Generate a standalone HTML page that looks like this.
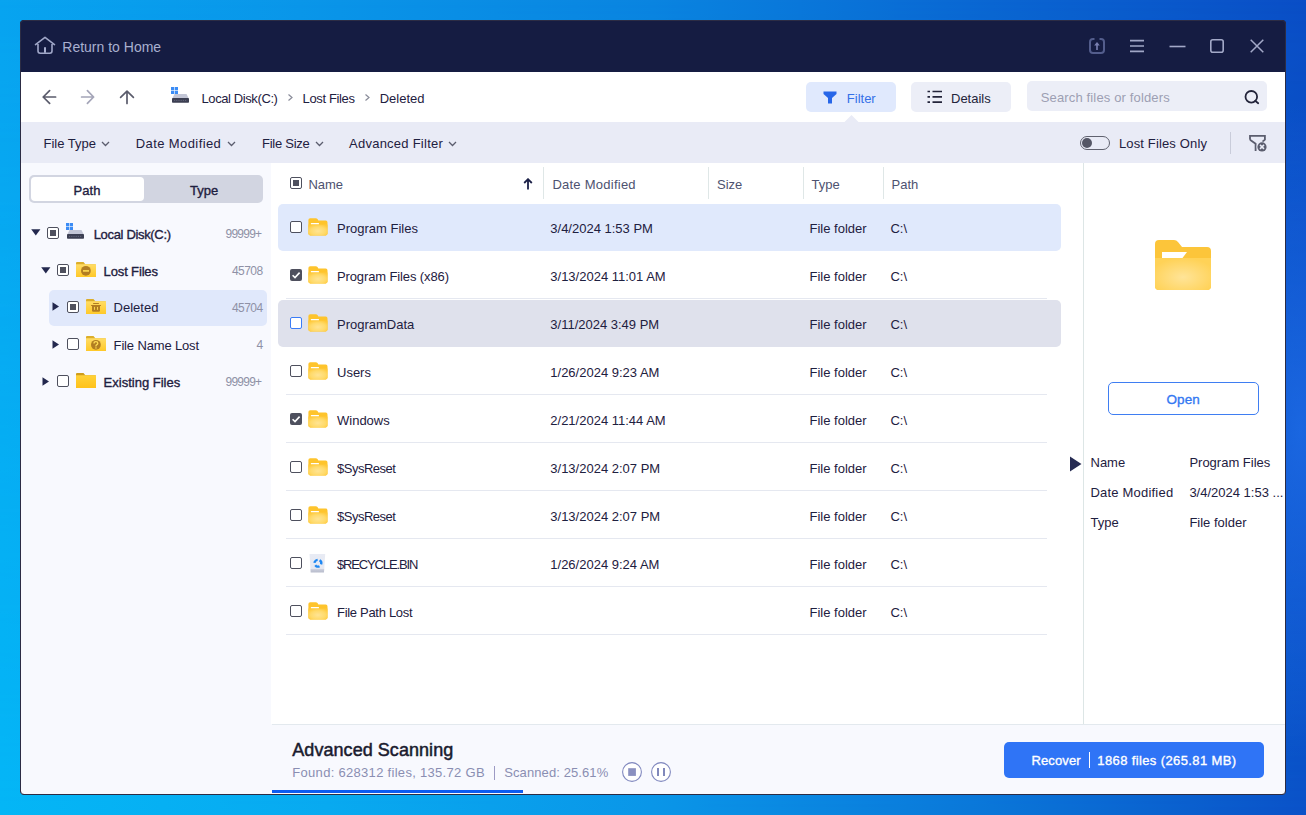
<!DOCTYPE html>
<html><head><meta charset="utf-8"><style>
html,body{margin:0;padding:0;}
body{width:1306px;height:815px;overflow:hidden;position:relative;font-family:"Liberation Sans",sans-serif;
background:linear-gradient(90deg,#08a4f0 0%,#0a96e9 23%,#0a84e0 50%,#0a66d2 76%,#0a4ec6 100%);}
body::before{content:"";position:absolute;left:0;top:0;width:1306px;height:815px;
background:linear-gradient(90deg,#04b6f6 0%,#08aaf0 25%,#0a96e8 50%,#0a76d8 76%,#0a52c8 100%);
-webkit-mask-image:linear-gradient(180deg,rgba(0,0,0,0) 0%,rgba(0,0,0,0.5) 50%,#000 100%);}
#bg2{position:absolute;left:1200px;top:0;width:106px;height:815px;
background:radial-gradient(ellipse 90px 330px at 100px 430px,rgba(40,120,245,0.55),rgba(40,120,245,0) 100%);}
#bd{position:absolute;left:20px;top:20px;width:1266px;height:775px;box-sizing:border-box;border:1px solid #2c2c44;border-radius:4px;pointer-events:none;}
.r{position:absolute;}
.t{position:absolute;white-space:nowrap;}
#win{position:absolute;left:20px;top:20px;width:1266px;height:775px;box-sizing:border-box;border:1px solid #2d3048;border-radius:4px;background:#f8f9fe;}
</style></head><body>
<div id="bg2"></div>
<div id="win"></div>
<div class="r" style="left:20px;top:20px;width:1266px;height:52px;background:#151c42;border-radius:4px 4px 0 0;"></div>
<svg class="r" style="left:34px;top:36px;" width="22" height="19" viewBox="0 0 22 19"><path d="M1.5 8.6 L11 1.3 L20.5 8.6 M4 6.8 V15 Q4 17.2 6.2 17.2 H15.8 Q18 17.2 18 15 V6.8" fill="none" stroke="#a0a7c8" stroke-width="1.6" stroke-linejoin="round" stroke-linecap="round"/><path d="M11 16.8 V11.2" stroke="#a8afd0" stroke-width="2"/></svg>
<div class="t" style="left:62.3px;top:38.15px;font-size:14px;line-height:18px;color:#a9b0d0;">Return to Home</div>
<svg class="r" style="left:1088px;top:37px;" width="18" height="18" viewBox="0 0 18 18"><path d="M6.5 2 H5 Q2 2 2 5 V13 Q2 16 5 16 H13 Q16 16 16 13 V5 Q16 2 13 2 H11.5" fill="none" stroke="#535d8c" stroke-width="2"/><path d="M6.2 8.6 L9 5 L11.8 8.6 Z" fill="#7a80b2"/><rect x="8.2" y="8" width="1.6" height="5" fill="#7a80b2"/></svg>
<svg class="r" style="left:1130px;top:39px;" width="14" height="14" viewBox="0 0 14 14"><path d="M0 1.6 H14 M0 7 H14 M0 12.4 H14" stroke="#a0a6c6" stroke-width="1.6"/></svg>
<svg class="r" style="left:1169px;top:45px;" width="17" height="3" viewBox="0 0 17 3"><path d="M0.5 1.5 H16.5" stroke="#a3a9c8" stroke-width="1.6"/></svg>
<svg class="r" style="left:1210px;top:39px;" width="14" height="14" viewBox="0 0 14 14"><rect x="0.8" y="0.8" width="12.4" height="12.4" rx="2" fill="none" stroke="#a3a9c8" stroke-width="1.6"/></svg>
<svg class="r" style="left:1250px;top:39px;" width="14" height="14" viewBox="0 0 14 14"><path d="M0.7 0.7 L13.3 13.3 M13.3 0.7 L0.7 13.3" stroke="#a3a9c8" stroke-width="1.5"/></svg>
<div class="r" style="left:21px;top:72px;width:1264px;height:50px;background:#ffffff;"></div>
<svg class="r" style="left:42px;top:89px;" width="16" height="16" viewBox="0 0 16 16"><path d="M13.6 8 H1.2 M7.6 1.6 L1.2 8 L7.6 14.4" fill="none" stroke="#5a5b6b" stroke-width="1.7" stroke-linecap="round" stroke-linejoin="round"/></svg>
<svg class="r" style="left:80px;top:89px;" width="16" height="16" viewBox="0 0 16 16"><path d="M1.6 8 H13.6 M7.4 1.6 L13.6 8 L7.4 14.4" fill="none" stroke="#a4a5b8" stroke-width="1.7" stroke-linecap="round" stroke-linejoin="round"/></svg>
<svg class="r" style="left:119px;top:89px;" width="16" height="16" viewBox="0 0 16 16"><path d="M8 14.4 V2.2 M1.6 8.4 L8 2.2 L14.4 8.4" fill="none" stroke="#5a5b6b" stroke-width="1.7" stroke-linecap="round" stroke-linejoin="round"/></svg>
<svg class="r" style="left:171px;top:87px;" width="19" height="17" viewBox="0 0 19 17"><rect x="0" y="0" width="3.2" height="3.2" fill="#3b8cf5"/><rect x="3.8" y="0" width="3.2" height="3.2" fill="#3b8cf5"/><rect x="0" y="3.8" width="3.2" height="3.2" fill="#3b8cf5"/><rect x="3.8" y="3.8" width="3.2" height="3.2" fill="#3b8cf5"/><path d="M3.5 7 H15.5 L17.5 11 H1.5 Z" fill="#c3c6d6"/><rect x="1" y="11" width="17" height="4.8" rx="0.8" fill="#3c3f52"/><path d="M3 13.4 H16" stroke="#6d7085" stroke-width="0.8" stroke-dasharray="1.2 1"/></svg>
<div class="t" style="left:201.5px;top:90.50px;font-size:13px;line-height:16px;color:#1e2040;letter-spacing:-0.4px;">Local Disk(C:)</div>
<svg class="r" style="left:287px;top:93px;" width="7" height="9" viewBox="0 0 7 9"><path d="M1.5 1.5 L5 4.5 L1.5 7.5" fill="none" stroke="#8a8c9a" stroke-width="1.2"/></svg>
<div class="t" style="left:302.5px;top:90.50px;font-size:13px;line-height:16px;color:#1e2040;letter-spacing:-0.35px;">Lost Files</div>
<svg class="r" style="left:364px;top:93px;" width="7" height="9" viewBox="0 0 7 9"><path d="M1.5 1.5 L5 4.5 L1.5 7.5" fill="none" stroke="#8a8c9a" stroke-width="1.2"/></svg>
<div class="t" style="left:379.7px;top:90.50px;font-size:13px;line-height:16px;color:#1e2040;">Deleted</div>
<div class="r" style="left:806px;top:82px;width:90px;height:30px;background:#e0e9fd;border-radius:5px;"></div>
<svg class="r" style="left:823px;top:91px;" width="14" height="13" viewBox="0 0 14 13"><path d="M0.5 0.5 H13.5 V3 L9 7 V12.5 H5 V7 L0.5 3 Z" fill="#2766e8"/></svg>
<div class="t" style="left:846.8px;top:90.50px;font-size:13px;line-height:16px;color:#3470e8;">Filter</div>
<div class="r" style="left:911px;top:82px;width:100px;height:30px;background:#eceef7;border-radius:5px;"></div>
<svg class="r" style="left:927px;top:90px;" width="16" height="14" viewBox="0 0 16 14"><path d="M0.5 1.5 H3 M0.5 6.8 H3 M0.5 12.2 H3 M5.5 1.5 H15 M5.5 6.8 H15 M5.5 12.2 H15" stroke="#23243a" stroke-width="1.7"/></svg>
<div class="t" style="left:951.0px;top:90.50px;font-size:13px;line-height:16px;color:#23243a;">Details</div>
<svg class="r" style="left:844px;top:115px;" width="15" height="8" viewBox="0 0 15 8"><path d="M0 7.5 L7.5 0 L15 7.5 Z" fill="#e9ebf6"/></svg>
<div class="r" style="left:1027px;top:81px;width:240px;height:30px;background:#eceef7;border-radius:5px;"></div>
<div class="t" style="left:1040.7px;top:89.50px;font-size:13px;line-height:16px;color:#9d9fb3;letter-spacing:0.15px;">Search files or folders</div>
<svg class="r" style="left:1244px;top:90px;" width="17" height="15" viewBox="0 0 17 15"><circle cx="7.3" cy="6.8" r="5.8" fill="none" stroke="#23243a" stroke-width="1.8"/><path d="M11.2 10.8 L14.2 13.2" stroke="#23243a" stroke-width="1.8" stroke-linecap="round"/></svg>
<div class="r" style="left:21px;top:122px;width:1264px;height:41px;background:#e9ebf6;"></div>
<div class="t" style="left:43.5px;top:136.10px;font-size:13px;line-height:16px;color:#1e2040;">File Type</div>
<svg class="r" style="left:100.5px;top:141px;" width="9" height="6" viewBox="0 0 9 6"><path d="M1 1 L4.5 4.5 L8 1" fill="none" stroke="#5b5d6e" stroke-width="1.3"/></svg>
<div class="t" style="left:135.8px;top:136.10px;font-size:13px;line-height:16px;color:#1e2040;letter-spacing:0.4px;">Date Modified</div>
<svg class="r" style="left:227px;top:141px;" width="9" height="6" viewBox="0 0 9 6"><path d="M1 1 L4.5 4.5 L8 1" fill="none" stroke="#5b5d6e" stroke-width="1.3"/></svg>
<div class="t" style="left:262.0px;top:136.10px;font-size:13px;line-height:16px;color:#1e2040;letter-spacing:-0.25px;">File Size</div>
<svg class="r" style="left:314.5px;top:141px;" width="9" height="6" viewBox="0 0 9 6"><path d="M1 1 L4.5 4.5 L8 1" fill="none" stroke="#5b5d6e" stroke-width="1.3"/></svg>
<div class="t" style="left:349.0px;top:136.10px;font-size:13px;line-height:16px;color:#1e2040;letter-spacing:0.25px;">Advanced Filter</div>
<svg class="r" style="left:448px;top:141px;" width="9" height="6" viewBox="0 0 9 6"><path d="M1 1 L4.5 4.5 L8 1" fill="none" stroke="#5b5d6e" stroke-width="1.3"/></svg>
<div class="r" style="left:1080px;top:136px;width:30px;height:14px;box-sizing:border-box;border:1.3px solid #60626f;border-radius:7px;"></div>
<div class="r" style="left:1082px;top:138px;width:10px;height:10px;background:#555766;border-radius:50%;"></div>
<div class="t" style="left:1118.9px;top:136.10px;font-size:13px;line-height:16px;color:#1e2040;letter-spacing:0.15px;">Lost Files Only</div>
<div class="r" style="left:1230px;top:132px;width:1px;height:22px;background:#c9ccda;"></div>
<svg class="r" style="left:1248px;top:134px;" width="21" height="20" viewBox="0 0 21 20"><path d="M2 5.8 V1.9 H16.9 V5.6 L14.3 7.9 M2 5.8 L7.6 9.8 V16.9" fill="none" stroke="#5b5d6e" stroke-width="1.8"/><circle cx="14" cy="12.9" r="5.4" fill="#e9ebf6"/><circle cx="14" cy="12.9" r="4.6" fill="#5b5d6e"/><path d="M12 10.9 L16 14.9 M16 10.9 L12 14.9" stroke="#e9ebf6" stroke-width="1.5"/></svg>
<div class="r" style="left:21px;top:163px;width:250px;height:631px;background:#f8f9fe;"></div>
<div class="r" style="left:29px;top:175px;width:234px;height:28px;background:#d2d5e1;border-radius:5px;"></div>
<div class="r" style="left:31px;top:177px;width:113px;height:24px;background:#ffffff;border-radius:4px;"></div>
<div class="t" style="left:73.4px;top:182.70px;font-size:13px;line-height:16px;color:#1e2040;-webkit-text-stroke:0.35px #1e2040;letter-spacing:0.1px;">Path</div>
<div class="t" style="left:190.0px;top:182.70px;font-size:13px;line-height:16px;color:#1e2040;-webkit-text-stroke:0.35px #1e2040;">Type</div>
<svg class="r" style="left:31px;top:229px;" width="10" height="7" viewBox="0 0 10 7"><path d="M0.2 0.3 H9.4 L4.8 6.6 Z" fill="#23284e"/></svg>
<div class="r" style="left:47px;top:227px;width:12px;height:12px;box-sizing:border-box;border:1.4px solid #4e505e;border-radius:2px;background:#fff;"></div>
<div class="r" style="left:50px;top:230px;width:6px;height:6px;background:#4e505e;"></div>
<svg class="r" style="left:66px;top:223px;" width="19" height="17" viewBox="0 0 19 17"><rect x="0" y="0" width="3.2" height="3.2" fill="#3b8cf5"/><rect x="3.8" y="0" width="3.2" height="3.2" fill="#3b8cf5"/><rect x="0" y="3.8" width="3.2" height="3.2" fill="#3b8cf5"/><rect x="3.8" y="3.8" width="3.2" height="3.2" fill="#3b8cf5"/><path d="M3.5 7 H15.5 L17.5 11 H1.5 Z" fill="#c3c6d6"/><rect x="1" y="11" width="17" height="4.8" rx="0.8" fill="#3c3f52"/><path d="M3 13.4 H16" stroke="#6d7085" stroke-width="0.8" stroke-dasharray="1.2 1"/></svg>
<div class="t" style="left:93.7px;top:226.50px;font-size:13px;line-height:16px;color:#1e2040;-webkit-text-stroke:0.35px #1e2040;letter-spacing:-0.33px;">Local Disk(C:)</div>
<div class="t" style="left:225.5px;top:227.34px;font-size:12px;line-height:15px;color:#8f91a6;letter-spacing:-0.75px;">99999+</div>
<svg class="r" style="left:41px;top:267px;" width="10" height="7" viewBox="0 0 10 7"><path d="M0.2 0.3 H9.4 L4.8 6.6 Z" fill="#23284e"/></svg>
<div class="r" style="left:57px;top:264px;width:12px;height:12px;box-sizing:border-box;border:1.4px solid #4e505e;border-radius:2px;background:#fff;"></div>
<div class="r" style="left:60px;top:267px;width:6px;height:6px;background:#4e505e;"></div>
<svg class="r" style="left:76px;top:262px;" width="20" height="15" viewBox="0 0 20 15"><defs><linearGradient id="g76262" x1="0" y1="0" x2="0" y2="1"><stop offset="0" stop-color="#ffdc66"/><stop offset="1" stop-color="#ffc928"/></linearGradient></defs><path d="M0 1 Q0 0 1 0 H7.5 L9.3 2.2 H19 Q20 2.2 20 3.2 V14.2 Q20 15 19.2 15 H0.8 Q0 15 0 14.2 Z" fill="#dcae2a"/><path d="M0 2.2 H20 V14.2 Q20 15 19.2 15 H0.8 Q0 15 0 14.2 Z" fill="url(#g76262)"/><circle cx="9.9" cy="8.8" r="4.9" fill="#b27d22"/><rect x="7" y="8.1" width="6" height="1.6" fill="#ffdc55"/></svg>
<div class="t" style="left:103.6px;top:263.50px;font-size:13px;line-height:16px;color:#1e2040;-webkit-text-stroke:0.35px #1e2040;letter-spacing:-0.14px;">Lost Files</div>
<div class="t" style="left:232.0px;top:264.34px;font-size:12px;line-height:15px;color:#8f91a6;letter-spacing:-0.55px;">45708</div>
<div class="r" style="left:49px;top:290px;width:218px;height:36px;background:#e0e8fb;border-radius:5px;"></div>
<svg class="r" style="left:52px;top:302px;" width="8" height="10" viewBox="0 0 8 10"><path d="M0.5 0.3 V8.7 L7 4.5 Z" fill="#23284e"/></svg>
<div class="r" style="left:67px;top:301px;width:12px;height:12px;box-sizing:border-box;border:1.4px solid #4e505e;border-radius:2px;background:#fff;"></div>
<div class="r" style="left:70px;top:304px;width:6px;height:6px;background:#4e505e;"></div>
<svg class="r" style="left:86px;top:299px;" width="20" height="15" viewBox="0 0 20 15"><defs><linearGradient id="g86299" x1="0" y1="0" x2="0" y2="1"><stop offset="0" stop-color="#ffdc66"/><stop offset="1" stop-color="#ffc928"/></linearGradient></defs><path d="M0 1 Q0 0 1 0 H7.5 L9.3 2.2 H19 Q20 2.2 20 3.2 V14.2 Q20 15 19.2 15 H0.8 Q0 15 0 14.2 Z" fill="#dcae2a"/><path d="M0 2.2 H20 V14.2 Q20 15 19.2 15 H0.8 Q0 15 0 14.2 Z" fill="url(#g86299)"/><rect x="7" y="3.9" width="6" height="1" rx="0.5" fill="#b27d22"/><rect x="5" y="6" width="10" height="1" rx="0.5" fill="#b27d22"/><path d="M6 6.8 H14 V11.5 Q14 12.8 12.7 12.8 H7.3 Q6 12.8 6 11.5 Z" fill="#b27d22"/><rect x="8.1" y="7.9" width="0.9" height="2.9" fill="#ffdc55"/><rect x="11.1" y="7.9" width="0.9" height="2.9" fill="#ffdc55"/></svg>
<div class="t" style="left:113.6px;top:300.20px;font-size:13px;line-height:16px;color:#1e2040;">Deleted</div>
<div class="t" style="left:232.0px;top:301.04px;font-size:12px;line-height:15px;color:#8f91a6;letter-spacing:-0.55px;">45704</div>
<svg class="r" style="left:52px;top:340px;" width="8" height="10" viewBox="0 0 8 10"><path d="M0.5 0.3 V8.7 L7 4.5 Z" fill="#23284e"/></svg>
<div class="r" style="left:67px;top:338px;width:12px;height:12px;box-sizing:border-box;border:1.4px solid #4e505e;border-radius:2px;background:#fff;"></div>
<svg class="r" style="left:86px;top:336px;" width="20" height="15" viewBox="0 0 20 15"><defs><linearGradient id="g86336" x1="0" y1="0" x2="0" y2="1"><stop offset="0" stop-color="#ffdc66"/><stop offset="1" stop-color="#ffc928"/></linearGradient></defs><path d="M0 1 Q0 0 1 0 H7.5 L9.3 2.2 H19 Q20 2.2 20 3.2 V14.2 Q20 15 19.2 15 H0.8 Q0 15 0 14.2 Z" fill="#dcae2a"/><path d="M0 2.2 H20 V14.2 Q20 15 19.2 15 H0.8 Q0 15 0 14.2 Z" fill="url(#g86336)"/><circle cx="9.9" cy="8.8" r="4.9" fill="#b27d22"/><path d="M8 7.4 Q8 5.6 9.9 5.6 Q11.8 5.6 11.8 7.3 Q11.8 8.4 10.6 8.9 Q9.9 9.2 9.9 10.4" fill="none" stroke="#ffdc55" stroke-width="1.3"/><rect x="9.3" y="11.3" width="1.3" height="1.3" fill="#ffdc55"/></svg>
<div class="t" style="left:113.6px;top:337.50px;font-size:13px;line-height:16px;color:#1e2040;letter-spacing:-0.15px;">File Name Lost</div>
<div class="t" style="left:256.5px;top:338.34px;font-size:12px;line-height:15px;color:#8f91a6;">4</div>
<svg class="r" style="left:42px;top:377px;" width="8" height="10" viewBox="0 0 8 10"><path d="M0.5 0.3 V8.7 L7 4.5 Z" fill="#23284e"/></svg>
<div class="r" style="left:57px;top:375px;width:12px;height:12px;box-sizing:border-box;border:1.4px solid #4e505e;border-radius:2px;background:#fff;"></div>
<svg class="r" style="left:76px;top:373px;" width="20" height="15" viewBox="0 0 20 15"><defs><linearGradient id="g76373" x1="0" y1="0" x2="0" y2="1"><stop offset="0" stop-color="#ffd23a"/><stop offset="1" stop-color="#ffc21a"/></linearGradient></defs><path d="M0 1 Q0 0 1 0 H7.5 L9.3 2.2 H19 Q20 2.2 20 3.2 V14.2 Q20 15 19.2 15 H0.8 Q0 15 0 14.2 Z" fill="#cf9d1c"/><path d="M0 2.2 H20 V14.2 Q20 15 19.2 15 H0.8 Q0 15 0 14.2 Z" fill="url(#g76373)"/></svg>
<div class="t" style="left:103.6px;top:374.50px;font-size:13px;line-height:16px;color:#1e2040;-webkit-text-stroke:0.35px #1e2040;">Existing Files</div>
<div class="t" style="left:225.5px;top:375.34px;font-size:12px;line-height:15px;color:#8f91a6;letter-spacing:-0.75px;">99999+</div>
<svg width="0" height="0" style="position:absolute"><defs><radialGradient id="fg" cx="0.5" cy="0.6" r="0.65"><stop offset="0" stop-color="#ffe494"/><stop offset="0.6" stop-color="#ffda6a"/><stop offset="1" stop-color="#ffc93a"/></radialGradient></defs></svg>
<div class="r" style="left:271px;top:163px;width:812px;height:561px;background:#ffffff;"></div>
<div class="r" style="left:290px;top:177px;width:12px;height:12px;box-sizing:border-box;border:1.4px solid #4e505e;border-radius:2px;background:#fff;"></div>
<div class="r" style="left:293px;top:180px;width:6px;height:6px;background:#4e505e;"></div>
<div class="t" style="left:308.4px;top:176.50px;font-size:13px;line-height:16px;color:#4d5270;">Name</div>
<svg class="r" style="left:522px;top:178px;" width="12" height="12" viewBox="0 0 12 12"><path d="M6 11.5 V1.5 M2.2 5 L6 1.2 L9.8 5" fill="none" stroke="#1b2047" stroke-width="1.8"/></svg>
<div class="r" style="left:543px;top:167px;width:1px;height:32px;background:#dfe7e7;"></div>
<div class="r" style="left:708px;top:167px;width:1px;height:32px;background:#dfe7e7;"></div>
<div class="r" style="left:803px;top:167px;width:1px;height:32px;background:#dfe7e7;"></div>
<div class="r" style="left:883px;top:167px;width:1px;height:32px;background:#dfe7e7;"></div>
<div class="t" style="left:552.4px;top:176.50px;font-size:13px;line-height:16px;color:#4d5270;letter-spacing:0.25px;">Date Modified</div>
<div class="t" style="left:717.0px;top:176.50px;font-size:13px;line-height:16px;color:#4d5270;">Size</div>
<div class="t" style="left:811.6px;top:176.50px;font-size:13px;line-height:16px;color:#4d5270;">Type</div>
<div class="t" style="left:891.6px;top:176.50px;font-size:13px;line-height:16px;color:#4d5270;">Path</div>
<div class="r" style="left:286px;top:250px;width:761px;height:1px;background:#e5e8f0;"></div>
<div class="r" style="left:278px;top:204px;width:783px;height:47px;background:#e0e9fc;border-radius:5px;"></div>
<div class="r" style="left:290px;top:221px;width:12px;height:12px;box-sizing:border-box;border:1.4px solid #4e505e;border-radius:2px;background:#fff;"></div>
<svg class="r" style="left:308px;top:218px;" width="20" height="18" viewBox="0 0 20 18"><path d="M0.4 2 Q0.4 0.2 2.2 0.2 H7.8 Q8.8 0.2 9.5 1.1 L10.4 2.6 H17.7 Q19.5 2.6 19.5 4.4 V15.6 Q19.5 17.4 17.7 17.4 H2.2 Q0.4 17.4 0.4 15.6 Z" fill="#fec42c"/><rect x="2.8" y="4.9" width="8.2" height="1.6" rx="0.5" fill="#fff"/><path d="M0.4 6.5 H19.5 V15.6 Q19.5 17.4 17.7 17.4 H2.2 Q0.4 17.4 0.4 15.6 Z" fill="url(#fg)"/></svg>
<div class="t" style="left:337.0px;top:220.80px;font-size:13px;line-height:16px;color:#1e2040;">Program Files</div>
<div class="t" style="left:550.3px;top:220.80px;font-size:13px;line-height:16px;color:#1e2040;">3/4/2024 1:53 PM</div>
<div class="t" style="left:809.5px;top:220.80px;font-size:13px;line-height:16px;color:#1e2040;">File folder</div>
<div class="t" style="left:890.4px;top:220.80px;font-size:13px;line-height:16px;color:#1e2040;">C:\</div>
<div class="r" style="left:286px;top:298px;width:761px;height:1px;background:#e5e8f0;"></div>
<div class="r" style="left:290px;top:269px;width:12px;height:12px;background:#4e505e;border-radius:2px;"></div>
<svg class="r" style="left:290px;top:269px;" width="12" height="12" viewBox="0 0 12 12"><path d="M2.6 6.2 L5 8.6 L9.6 3.6" fill="none" stroke="#fff" stroke-width="1.6"/></svg>
<svg class="r" style="left:308px;top:266px;" width="20" height="18" viewBox="0 0 20 18"><path d="M0.4 2 Q0.4 0.2 2.2 0.2 H7.8 Q8.8 0.2 9.5 1.1 L10.4 2.6 H17.7 Q19.5 2.6 19.5 4.4 V15.6 Q19.5 17.4 17.7 17.4 H2.2 Q0.4 17.4 0.4 15.6 Z" fill="#fec42c"/><rect x="2.8" y="4.9" width="8.2" height="1.6" rx="0.5" fill="#fff"/><path d="M0.4 6.5 H19.5 V15.6 Q19.5 17.4 17.7 17.4 H2.2 Q0.4 17.4 0.4 15.6 Z" fill="url(#fg)"/></svg>
<div class="t" style="left:337.0px;top:268.80px;font-size:13px;line-height:16px;color:#1e2040;letter-spacing:-0.12px;">Program Files (x86)</div>
<div class="t" style="left:550.3px;top:268.80px;font-size:13px;line-height:16px;color:#1e2040;">3/13/2024 11:01 AM</div>
<div class="t" style="left:809.5px;top:268.80px;font-size:13px;line-height:16px;color:#1e2040;">File folder</div>
<div class="t" style="left:890.4px;top:268.80px;font-size:13px;line-height:16px;color:#1e2040;">C:\</div>
<div class="r" style="left:286px;top:346px;width:761px;height:1px;background:#e5e8f0;"></div>
<div class="r" style="left:278px;top:300px;width:783px;height:47px;background:#dfe1ec;border-radius:5px;"></div>
<div class="r" style="left:290px;top:317px;width:12px;height:12px;box-sizing:border-box;border:1.4px solid #3b7cf6;border-radius:2px;background:#fff;"></div>
<svg class="r" style="left:308px;top:314px;" width="20" height="18" viewBox="0 0 20 18"><path d="M0.4 2 Q0.4 0.2 2.2 0.2 H7.8 Q8.8 0.2 9.5 1.1 L10.4 2.6 H17.7 Q19.5 2.6 19.5 4.4 V15.6 Q19.5 17.4 17.7 17.4 H2.2 Q0.4 17.4 0.4 15.6 Z" fill="#fec42c"/><rect x="2.8" y="4.9" width="8.2" height="1.6" rx="0.5" fill="#fff"/><path d="M0.4 6.5 H19.5 V15.6 Q19.5 17.4 17.7 17.4 H2.2 Q0.4 17.4 0.4 15.6 Z" fill="url(#fg)"/></svg>
<div class="t" style="left:337.0px;top:316.80px;font-size:13px;line-height:16px;color:#1e2040;">ProgramData</div>
<div class="t" style="left:550.3px;top:316.80px;font-size:13px;line-height:16px;color:#1e2040;">3/11/2024 3:49 PM</div>
<div class="t" style="left:809.5px;top:316.80px;font-size:13px;line-height:16px;color:#1e2040;">File folder</div>
<div class="t" style="left:890.4px;top:316.80px;font-size:13px;line-height:16px;color:#1e2040;">C:\</div>
<div class="r" style="left:286px;top:394px;width:761px;height:1px;background:#e5e8f0;"></div>
<div class="r" style="left:290px;top:365px;width:12px;height:12px;box-sizing:border-box;border:1.4px solid #4e505e;border-radius:2px;background:#fff;"></div>
<svg class="r" style="left:308px;top:362px;" width="20" height="18" viewBox="0 0 20 18"><path d="M0.4 2 Q0.4 0.2 2.2 0.2 H7.8 Q8.8 0.2 9.5 1.1 L10.4 2.6 H17.7 Q19.5 2.6 19.5 4.4 V15.6 Q19.5 17.4 17.7 17.4 H2.2 Q0.4 17.4 0.4 15.6 Z" fill="#fec42c"/><rect x="2.8" y="4.9" width="8.2" height="1.6" rx="0.5" fill="#fff"/><path d="M0.4 6.5 H19.5 V15.6 Q19.5 17.4 17.7 17.4 H2.2 Q0.4 17.4 0.4 15.6 Z" fill="url(#fg)"/></svg>
<div class="t" style="left:337.0px;top:364.80px;font-size:13px;line-height:16px;color:#1e2040;">Users</div>
<div class="t" style="left:550.3px;top:364.80px;font-size:13px;line-height:16px;color:#1e2040;">1/26/2024 9:23 AM</div>
<div class="t" style="left:809.5px;top:364.80px;font-size:13px;line-height:16px;color:#1e2040;">File folder</div>
<div class="t" style="left:890.4px;top:364.80px;font-size:13px;line-height:16px;color:#1e2040;">C:\</div>
<div class="r" style="left:286px;top:442px;width:761px;height:1px;background:#e5e8f0;"></div>
<div class="r" style="left:290px;top:413px;width:12px;height:12px;background:#4e505e;border-radius:2px;"></div>
<svg class="r" style="left:290px;top:413px;" width="12" height="12" viewBox="0 0 12 12"><path d="M2.6 6.2 L5 8.6 L9.6 3.6" fill="none" stroke="#fff" stroke-width="1.6"/></svg>
<svg class="r" style="left:308px;top:410px;" width="20" height="18" viewBox="0 0 20 18"><path d="M0.4 2 Q0.4 0.2 2.2 0.2 H7.8 Q8.8 0.2 9.5 1.1 L10.4 2.6 H17.7 Q19.5 2.6 19.5 4.4 V15.6 Q19.5 17.4 17.7 17.4 H2.2 Q0.4 17.4 0.4 15.6 Z" fill="#fec42c"/><rect x="2.8" y="4.9" width="8.2" height="1.6" rx="0.5" fill="#fff"/><path d="M0.4 6.5 H19.5 V15.6 Q19.5 17.4 17.7 17.4 H2.2 Q0.4 17.4 0.4 15.6 Z" fill="url(#fg)"/></svg>
<div class="t" style="left:337.0px;top:412.80px;font-size:13px;line-height:16px;color:#1e2040;">Windows</div>
<div class="t" style="left:550.3px;top:412.80px;font-size:13px;line-height:16px;color:#1e2040;">2/21/2024 11:44 AM</div>
<div class="t" style="left:809.5px;top:412.80px;font-size:13px;line-height:16px;color:#1e2040;">File folder</div>
<div class="t" style="left:890.4px;top:412.80px;font-size:13px;line-height:16px;color:#1e2040;">C:\</div>
<div class="r" style="left:286px;top:490px;width:761px;height:1px;background:#e5e8f0;"></div>
<div class="r" style="left:290px;top:461px;width:12px;height:12px;box-sizing:border-box;border:1.4px solid #4e505e;border-radius:2px;background:#fff;"></div>
<svg class="r" style="left:308px;top:458px;" width="20" height="18" viewBox="0 0 20 18"><path d="M0.4 2 Q0.4 0.2 2.2 0.2 H7.8 Q8.8 0.2 9.5 1.1 L10.4 2.6 H17.7 Q19.5 2.6 19.5 4.4 V15.6 Q19.5 17.4 17.7 17.4 H2.2 Q0.4 17.4 0.4 15.6 Z" fill="#fec42c"/><rect x="2.8" y="4.9" width="8.2" height="1.6" rx="0.5" fill="#fff"/><path d="M0.4 6.5 H19.5 V15.6 Q19.5 17.4 17.7 17.4 H2.2 Q0.4 17.4 0.4 15.6 Z" fill="url(#fg)"/></svg>
<div class="t" style="left:337.0px;top:460.80px;font-size:13px;line-height:16px;color:#1e2040;letter-spacing:-0.5px;">$SysReset</div>
<div class="t" style="left:550.3px;top:460.80px;font-size:13px;line-height:16px;color:#1e2040;">3/13/2024 2:07 PM</div>
<div class="t" style="left:809.5px;top:460.80px;font-size:13px;line-height:16px;color:#1e2040;">File folder</div>
<div class="t" style="left:890.4px;top:460.80px;font-size:13px;line-height:16px;color:#1e2040;">C:\</div>
<div class="r" style="left:286px;top:538px;width:761px;height:1px;background:#e5e8f0;"></div>
<div class="r" style="left:290px;top:509px;width:12px;height:12px;box-sizing:border-box;border:1.4px solid #4e505e;border-radius:2px;background:#fff;"></div>
<svg class="r" style="left:308px;top:506px;" width="20" height="18" viewBox="0 0 20 18"><path d="M0.4 2 Q0.4 0.2 2.2 0.2 H7.8 Q8.8 0.2 9.5 1.1 L10.4 2.6 H17.7 Q19.5 2.6 19.5 4.4 V15.6 Q19.5 17.4 17.7 17.4 H2.2 Q0.4 17.4 0.4 15.6 Z" fill="#fec42c"/><rect x="2.8" y="4.9" width="8.2" height="1.6" rx="0.5" fill="#fff"/><path d="M0.4 6.5 H19.5 V15.6 Q19.5 17.4 17.7 17.4 H2.2 Q0.4 17.4 0.4 15.6 Z" fill="url(#fg)"/></svg>
<div class="t" style="left:337.0px;top:508.80px;font-size:13px;line-height:16px;color:#1e2040;letter-spacing:-0.5px;">$SysReset</div>
<div class="t" style="left:550.3px;top:508.80px;font-size:13px;line-height:16px;color:#1e2040;">3/13/2024 2:07 PM</div>
<div class="t" style="left:809.5px;top:508.80px;font-size:13px;line-height:16px;color:#1e2040;">File folder</div>
<div class="t" style="left:890.4px;top:508.80px;font-size:13px;line-height:16px;color:#1e2040;">C:\</div>
<div class="r" style="left:286px;top:586px;width:761px;height:1px;background:#e5e8f0;"></div>
<div class="r" style="left:290px;top:557px;width:12px;height:12px;box-sizing:border-box;border:1.4px solid #4e505e;border-radius:2px;background:#fff;"></div>
<svg class="r" style="left:309px;top:554px;" width="17" height="19" viewBox="0 0 17 19"><defs><linearGradient id="rb" x1="0" y1="0" x2="0" y2="1"><stop offset="0" stop-color="#e8ebf4"/><stop offset="0.78" stop-color="#e6e9f2"/><stop offset="0.85" stop-color="#c5c9d8"/><stop offset="1" stop-color="#b8bccc"/></linearGradient></defs><path d="M0.5 0 H16.2 L15 18.5 H1.7 Z" fill="url(#rb)"/><circle cx="8.9" cy="9.2" r="3.4" fill="none" stroke="#1e88f2" stroke-width="2.3" stroke-dasharray="4.6 2.5" transform="rotate(-60 8.9 9.2)"/></svg>
<div class="t" style="left:337.0px;top:556.80px;font-size:13px;line-height:16px;color:#1e2040;letter-spacing:-1.15px;">$RECYCLE.BIN</div>
<div class="t" style="left:550.3px;top:556.80px;font-size:13px;line-height:16px;color:#1e2040;">1/26/2024 9:24 AM</div>
<div class="t" style="left:809.5px;top:556.80px;font-size:13px;line-height:16px;color:#1e2040;">File folder</div>
<div class="t" style="left:890.4px;top:556.80px;font-size:13px;line-height:16px;color:#1e2040;">C:\</div>
<div class="r" style="left:286px;top:634px;width:761px;height:1px;background:#e5e8f0;"></div>
<div class="r" style="left:290px;top:605px;width:12px;height:12px;box-sizing:border-box;border:1.4px solid #4e505e;border-radius:2px;background:#fff;"></div>
<svg class="r" style="left:308px;top:602px;" width="20" height="18" viewBox="0 0 20 18"><path d="M0.4 2 Q0.4 0.2 2.2 0.2 H7.8 Q8.8 0.2 9.5 1.1 L10.4 2.6 H17.7 Q19.5 2.6 19.5 4.4 V15.6 Q19.5 17.4 17.7 17.4 H2.2 Q0.4 17.4 0.4 15.6 Z" fill="#fec42c"/><rect x="2.8" y="4.9" width="8.2" height="1.6" rx="0.5" fill="#fff"/><path d="M0.4 6.5 H19.5 V15.6 Q19.5 17.4 17.7 17.4 H2.2 Q0.4 17.4 0.4 15.6 Z" fill="url(#fg)"/></svg>
<div class="t" style="left:337.0px;top:604.80px;font-size:13px;line-height:16px;color:#1e2040;letter-spacing:-0.3px;">File Path Lost</div>
<div class="t" style="left:809.5px;top:604.80px;font-size:13px;line-height:16px;color:#1e2040;">File folder</div>
<div class="t" style="left:890.4px;top:604.80px;font-size:13px;line-height:16px;color:#1e2040;">C:\</div>
<div class="r" style="left:1083px;top:163px;width:1px;height:561px;background:#dde6e6;"></div>
<div class="r" style="left:1084px;top:163px;width:201px;height:561px;background:#ffffff;"></div>
<svg class="r" style="left:1155px;top:240px;" width="56" height="50" viewBox="0 0 56 50"><path d="M0 4 Q0 0 4 0 H19 Q21.5 0 23 2 L27 7 H52 Q56 7 56 11 V46 Q56 50 52 50 H4 Q0 50 0 46 Z" fill="#fcc53a"/><path d="M7 12 H32 L27.5 18 H7 Z" fill="#ffffff"/><defs><radialGradient id="bg1" cx="0.5" cy="0.6" r="0.6"><stop offset="0" stop-color="#ffe498"/><stop offset="1" stop-color="#ffd257"/></radialGradient></defs><path d="M0 18 H56 V46 Q56 50 52 50 H4 Q0 50 0 46 Z" fill="url(#bg1)"/></svg>
<div class="r" style="left:1108px;top:382px;width:151px;height:33px;box-sizing:border-box;border:1px solid #3f7ef2;border-radius:5px;background:#fff;"></div>
<div class="t" style="left:1166.5px;top:390.82px;font-size:13.5px;line-height:17px;color:#3478f2;-webkit-text-stroke:0.35px #3478f2;letter-spacing:0.1px;">Open</div>
<svg class="r" style="left:1069px;top:456px;" width="13" height="16" viewBox="0 0 13 16"><path d="M1 0.5 V15.5 L12.5 8 Z" fill="#262b52"/></svg>
<div class="t" style="left:1090.5px;top:454.50px;font-size:13px;line-height:16px;color:#1e2040;">Name</div>
<div class="t" style="left:1189.4px;top:454.50px;font-size:13px;line-height:16px;color:#1e2040;">Program Files</div>
<div class="t" style="left:1090.5px;top:484.50px;font-size:13px;line-height:16px;color:#1e2040;letter-spacing:0.2px;">Date Modified</div>
<div class="t" style="left:1189.4px;top:484.50px;font-size:13px;line-height:16px;color:#1e2040;">3/4/2024 1:53 ...</div>
<div class="t" style="left:1090.5px;top:514.50px;font-size:13px;line-height:16px;color:#1e2040;">Type</div>
<div class="t" style="left:1189.4px;top:514.50px;font-size:13px;line-height:16px;color:#1e2040;">File folder</div>
<div class="r" style="left:272px;top:724px;width:1013px;height:70px;background:#f8f9fe;border-top:1px solid #e3e9ee;box-sizing:border-box;"></div>
<div class="t" style="left:292.3px;top:738.76px;font-size:18px;line-height:22px;color:#1a1b2e;-webkit-text-stroke:0.5px #1a1b2e;letter-spacing:0.05px;">Advanced Scanning</div>
<div class="t" style="left:292.3px;top:764.80px;font-size:13px;line-height:16px;color:#8a8eb2;letter-spacing:0.3px;">Found: 628312 files, 135.72 GB</div>
<div class="r" style="left:494px;top:766px;width:1px;height:14px;background:#9c9ac4;"></div>
<div class="t" style="left:504.2px;top:764.80px;font-size:13px;line-height:16px;color:#8a8eb2;letter-spacing:0.1px;">Scanned: 25.61%</div>
<svg class="r" style="left:622px;top:762px;" width="20" height="20" viewBox="0 0 20 20"><circle cx="10" cy="10" r="9.4" fill="#fff" stroke="#8088bf" stroke-width="1.1"/><rect x="6.2" y="6.2" width="7.7" height="7.7" fill="#8a90c0"/></svg>
<svg class="r" style="left:651px;top:762px;" width="20" height="20" viewBox="0 0 20 20"><circle cx="10" cy="10" r="9.4" fill="#fff" stroke="#8088bf" stroke-width="1.1"/><path d="M7 6 V14 M13 6 V14" stroke="#8088bb" stroke-width="2"/></svg>
<div class="r" style="left:272px;top:790px;width:251px;height:3px;background:#0c5cf0;"></div>
<div class="r" style="left:1004px;top:742px;width:260px;height:36px;background:#2f74f6;border-radius:5px;"></div>
<div class="t" style="left:1031.4px;top:752.50px;font-size:13px;line-height:16px;color:#ffffff;-webkit-text-stroke:0.35px #ffffff;letter-spacing:0.13px;">Recover</div>
<div class="r" style="left:1089px;top:752px;width:1px;height:16px;background:#ffffff;"></div>
<div class="t" style="left:1097.3px;top:752.50px;font-size:13px;line-height:16px;color:#ffffff;-webkit-text-stroke:0.35px #ffffff;letter-spacing:0.38px;">1868 files (265.81 MB)</div>
<div id="bd"></div>
</body></html>
